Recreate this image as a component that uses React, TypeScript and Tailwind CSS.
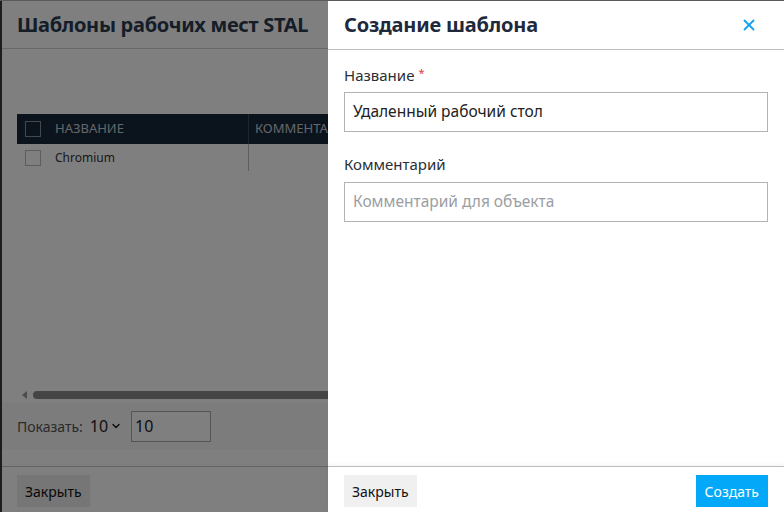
import { X, ChevronDown } from "lucide-react";

const font = { fontFamily: '"Noto Sans", "Open Sans", sans-serif' };

// Templates list dialog sitting behind the drawer
function TemplatesDialog() {
  return (
    <div className="flex h-full flex-col bg-white border-l-2 border-[#3a3a3a]">
      <div className="flex h-[48px] items-center px-[15px] border-b border-[#d0d0d0]">
        <h1 className="text-[20px] font-bold tracking-[-0.3px] text-[#2a3a50] whitespace-nowrap">
          Шаблоны рабочих мест STAL
        </h1>
      </div>

      <div className="flex-1 pt-[65px] pl-[15px]">
        <div className="flex h-[30px] items-center bg-[#16283a] text-[13px] text-[#c8ccd2]">
          <div className="flex w-[232px] items-center gap-[14px] pl-[8px] border-r border-[#3c4a5a] h-full">
            <span className="h-[16px] w-[16px] border border-[#8a939c]" />
            <span>НАЗВАНИЕ</span>
          </div>
          <span className="pl-[6px] whitespace-nowrap">КОММЕНТАРИЙ</span>
        </div>
        <div className="flex h-[27px] items-center text-[12px] text-[#333]">
          <div className="flex w-[232px] items-center gap-[14px] pl-[8px] border-r border-[#bbb] h-full">
            <span className="h-[16px] w-[16px] border border-[#bbb]" />
            <span>Chromium</span>
          </div>
        </div>
      </div>

      <div className="flex items-center h-[10px] pl-[20px] gap-[6px]">
        <span className="w-0 h-0 border-y-[4px] border-y-transparent border-r-[5px] border-r-[#999]" />
        <div className="flex-1 h-[8px] rounded-l-full bg-[#8a8a8a]" />
      </div>

      <div className="flex h-[46px] items-center gap-[7px] pl-[15px] bg-[#f9f9f9] mt-[3px] text-[14px] text-[#555]">
        <span>Показать:</span>
        <span className="flex items-center gap-[2px] text-[16px] text-[#222]">
          10 <ChevronDown className="w-[12px] h-[12px]" strokeWidth={3} />
        </span>
        <div className="ml-[2px] flex h-[31px] w-[80px] items-center border border-[#aaa] px-[3px] text-[16px] text-[#222] bg-white">
          10
        </div>
      </div>

      <div className="h-[17px]" />
      <div className="flex h-[46px] items-start pt-[8px] pl-[15px] border-t border-[#c8c8c8]">
        <button className="h-[32px] px-[8px] bg-[#ececec] text-[14px] text-[#111]">Закрыть</button>
      </div>
    </div>
  );
}

// Drawer with the create form
function CreateTemplateDrawer() {
  return (
    <div className="absolute right-0 top-0 bottom-0 w-[456px] flex flex-col bg-white">
      <div className="flex h-[49px] items-center justify-between pl-[16px] pr-[26px] border-b border-[#bdbdbd]">
        <h2 className="text-[20px] font-bold tracking-[-0.2px] text-[#1e2a3b]">Создание шаблона</h2>
        <X className="w-[18px] h-[18px] text-[#1aa3ef]" strokeWidth={2.5} />
      </div>

      <div className="flex-1 px-[16px] pt-[14px]">
        <label className="block text-[15px] text-[#2a2f36] h-[28px]">
          Название
          <sup className="text-[#e23b3b] text-[11px] ml-[4px] relative -top-[4px]">*</sup>
        </label>
        <div className="flex h-[40px] items-center border border-[#b3b3b3] px-[8px] text-[15.5px] text-[#222]">
          Удаленный рабочий стол
        </div>

        <label className="block mt-[21px] text-[15px] text-[#2a2f36] h-[29px]">Комментарий</label>
        <div className="flex h-[40px] items-center border border-[#b3b3b3] px-[8px] text-[15.5px] text-[#9a9ea4]">
          Комментарий для объекта
        </div>
      </div>

      <div className="flex h-[46px] items-start justify-between pt-[8px] px-[16px] border-t border-[#bdbdbd] shadow-[0_-2px_4px_rgba(0,0,0,0.04)]">
        <button className="h-[32px] px-[8px] bg-[#f0f0f0] text-[14px] text-[#111]">Закрыть</button>
        <button className="h-[32px] px-[9px] bg-[#03a9f8] text-[14px] text-white">Создать</button>
      </div>
    </div>
  );
}

export default function App() {
  return (
    <div className="relative h-[512px] w-[784px] overflow-hidden border-t border-[#5a5a5a]" style={font}>
      <TemplatesDialog />
      {/* dim backdrop */}
      <div className="absolute inset-0 bg-black/50" />
      <CreateTemplateDrawer />
    </div>
  );
}
